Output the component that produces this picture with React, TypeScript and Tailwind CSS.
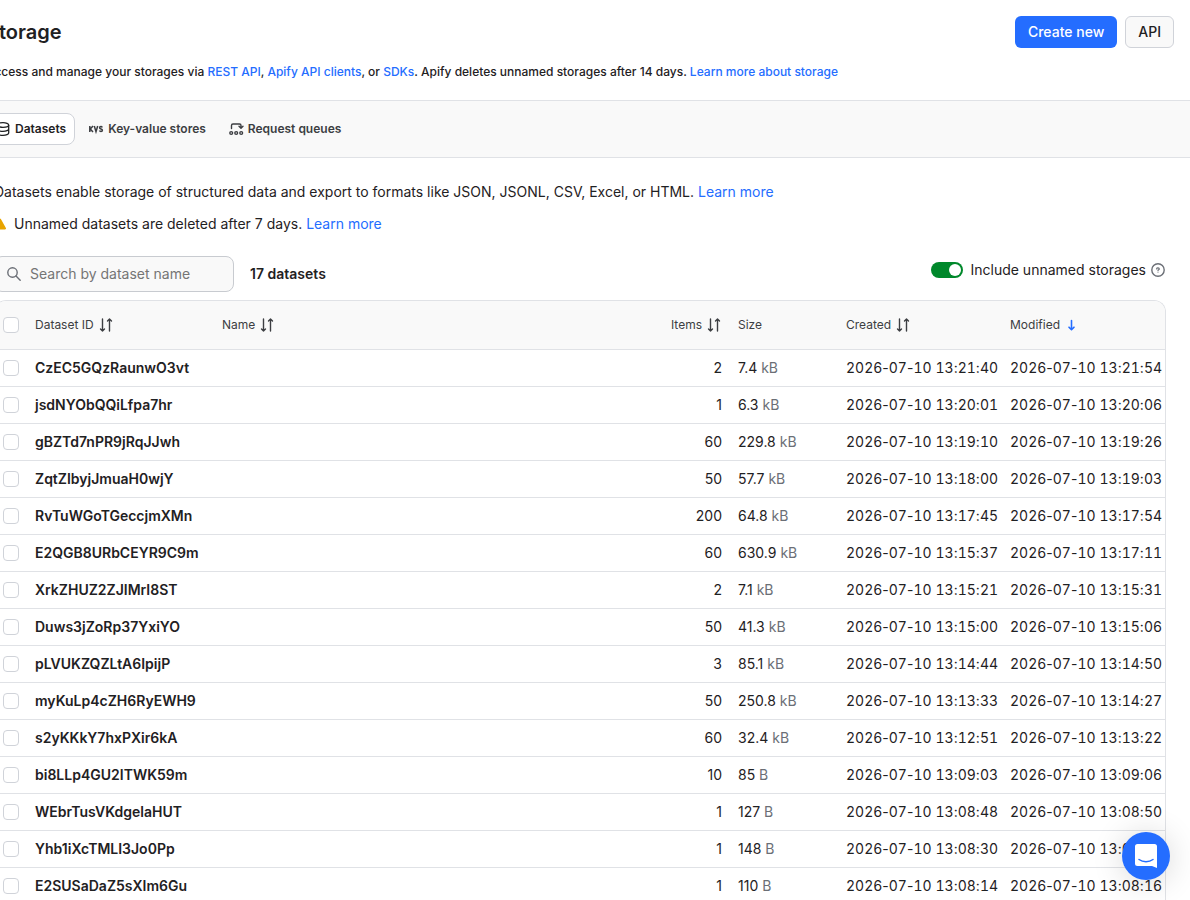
import React, { useState } from 'react';

interface Dataset {
  id: string;
  items: number;
  size: string;
  unit: string;
  created: string;
  modified: string;
}

const datasets: Dataset[] = [
  { id: 'CzEC5GQzRaunwO3vt', items: 2, size: '7.4', unit: 'kB', created: '2026-07-10 13:21:40', modified: '2026-07-10 13:21:54' },
  { id: 'jsdNYObQQiLfpa7hr', items: 1, size: '6.3', unit: 'kB', created: '2026-07-10 13:20:01', modified: '2026-07-10 13:20:06' },
  { id: 'gBZTd7nPR9jRqJJwh', items: 60, size: '229.8', unit: 'kB', created: '2026-07-10 13:19:10', modified: '2026-07-10 13:19:26' },
  { id: 'ZqtZIbyjJmuaH0wjY', items: 50, size: '57.7', unit: 'kB', created: '2026-07-10 13:18:00', modified: '2026-07-10 13:19:03' },
  { id: 'RvTuWGoTGeccjmXMn', items: 200, size: '64.8', unit: 'kB', created: '2026-07-10 13:17:45', modified: '2026-07-10 13:17:54' },
  { id: 'E2QGB8URbCEYR9C9m', items: 60, size: '630.9', unit: 'kB', created: '2026-07-10 13:15:37', modified: '2026-07-10 13:17:11' },
  { id: 'XrkZHUZ2ZJIMrI8ST', items: 2, size: '7.1', unit: 'kB', created: '2026-07-10 13:15:21', modified: '2026-07-10 13:15:31' },
  { id: 'Duws3jZoRp37YxiYO', items: 50, size: '41.3', unit: 'kB', created: '2026-07-10 13:15:00', modified: '2026-07-10 13:15:06' },
  { id: 'pLVUKZQZLtA6IpijP', items: 3, size: '85.1', unit: 'kB', created: '2026-07-10 13:14:44', modified: '2026-07-10 13:14:50' },
  { id: 'myKuLp4cZH6RyEWH9', items: 50, size: '250.8', unit: 'kB', created: '2026-07-10 13:13:33', modified: '2026-07-10 13:14:27' },
  { id: 's2yKKkY7hxPXir6kA', items: 60, size: '32.4', unit: 'kB', created: '2026-07-10 13:12:51', modified: '2026-07-10 13:13:22' },
  { id: 'bi8LLp4GU2ITWK59m', items: 10, size: '85', unit: 'B', created: '2026-07-10 13:09:03', modified: '2026-07-10 13:09:06' },
  { id: 'WEbrTusVKdgelaHUT', items: 1, size: '127', unit: 'B', created: '2026-07-10 13:08:48', modified: '2026-07-10 13:08:50' },
  { id: 'Yhb1iXcTMLI3Jo0Pp', items: 1, size: '148', unit: 'B', created: '2026-07-10 13:08:30', modified: '2026-07-10 13:08:32' },
  { id: 'E2SUSaDaZ5sXIm6Gu', items: 1, size: '110', unit: 'B', created: '2026-07-10 13:08:14', modified: '2026-07-10 13:08:16' },
];

const SortIcon = () => (
  <svg className="h-4 w-4 shrink-0" viewBox="0 0 16 16" fill="none" stroke="#3c3e42" strokeWidth="1.4" strokeLinecap="round" strokeLinejoin="round">
    <path d="M4.500 2v12M2.500 12 4.500 14l2-2M11.500 14V2M9.500 4l2-2 2 2" />
  </svg>
);

const DownIcon = () => (
  <svg className="h-4 w-4 shrink-0" viewBox="0 0 16 16" fill="none" stroke="#246dff" strokeWidth="1.6" strokeLinecap="round" strokeLinejoin="round">
    <path d="M7.500 3.600v9M5 10.200l2.500 2.500 2.500-2.500" />
  </svg>
);

const DatasetIcon = () => (
  <svg className="h-4 w-4 shrink-0" viewBox="0 0 16 16" fill="none" stroke="currentColor" strokeWidth="1.3">
    <ellipse cx="8" cy="4" rx="5.700" ry="2.300" />
    <path d="M2.300 4v8c0 1.300 2.500 2.300 5.700 2.300s5.700-1 5.700-2.300V4M2.300 8c0 1.300 2.500 2.300 5.700 2.300s5.700-1 5.700-2.300" />
  </svg>
);

const KvsIcon = () => (
  <svg className="h-4 w-4 shrink-0" viewBox="0 0 16 16" fill="none" stroke="currentColor" strokeWidth="1.500">
    <path d="M1.800 5v6M5 5 2.300 8 5 11M6.300 5 8 10.600 9.700 5M14.200 6.400c-.2-.6-.7-.8-1.300-.8-.8 0-1.300.4-1.300 1.100 0 1.600 2.800.9 2.800 2.600 0 .8-.6 1.200-1.400 1.200-.8 0-1.300-.3-1.500-.9" />
  </svg>
);

const QueueIcon = () => (
  <svg className="h-4 w-4 shrink-0" viewBox="0 0 16 16" fill="none" stroke="currentColor" strokeWidth="1.4" strokeLinecap="round" strokeLinejoin="round">
    <path d="M3.500 7.500V4.500a1.500 1.500 0 0 1 1.500-1.500h6.500a1.500 1.500 0 0 1 1.500 1.500v2.500M11 5.300l2 2 2-2" />
    <circle cx="3.200" cy="12" r="1.400" />
    <circle cx="8.200" cy="12" r="1.400" />
    <circle cx="13.200" cy="12" r="1.400" />
  </svg>
);

const WarningIcon = () => (
  <svg className="h-3 w-3 shrink-0" viewBox="0 0 12 12">
    <path d="M6 1.500 11 10.500H1Z" fill="#e8a400" stroke="#e8a400" strokeWidth="2" strokeLinejoin="round" />
    <path d="M5.500 4v3.500M5.500 9v1" stroke="#fff" strokeWidth="1" />
  </svg>
);

const SearchIcon = () => (
  <svg className="h-4 w-4 shrink-0" viewBox="0 0 16 16" fill="none" stroke="#6b6f76" strokeWidth="1.4" strokeLinecap="round">
    <circle cx="6.500" cy="6.500" r="4.700" />
    <path d="m10 10 4.200 4.200" />
  </svg>
);

const HelpIcon = () => (
  <svg className="h-4 w-4 shrink-0" viewBox="0 0 16 16" fill="none" stroke="#6b6f76" strokeWidth="1.400" strokeLinecap="round">
    <circle cx="8" cy="8" r="6.200" />
    <path d="M6.700 6.900c0-1.500 2.600-1.400 2.600 0 0 .8-1.300.8-1.300 1.500M8 10v.1" strokeWidth="1.200" />
  </svg>
);

const ChatIcon = () => (
  <svg className="h-6 w-6" viewBox="0 0 24 24">
    <path d="M3.500 0h17A2.500 2.500 0 0 1 23 2.500V24l-5-2H3.500A2.500 2.500 0 0 1 1 19.500v-17A2.500 2.500 0 0 1 3.500 0Z" fill="#fff" />
    <path d="M5 15.500c4 3 10 3 14 0" fill="none" stroke="#246dff" strokeWidth="1.500" strokeLinecap="round" />
  </svg>
);

interface LinkProps {
  children: React.ReactNode;
}

const TextLink: React.FC<LinkProps> = ({ children }) => (
  <a href="#" className="text-[#246dff] hover:underline">{children}</a>
);

interface TabProps {
  icon: React.ReactNode;
  label: string;
  active: boolean;
  onClick: () => void;
}

const Tab: React.FC<TabProps> = ({ icon, label, active, onClick }) => (
  <button
    type="button"
    role="tab"
    aria-selected={active}
    onClick={onClick}
    className={`flex h-8 items-center gap-1 rounded-lg border px-2 text-xs font-semibold ${active ? 'border-[#d0d3d9] bg-white text-[#1f2123]' : 'border-transparent text-[#3c3e42]'}`}
  >
    {icon}
    {label}
  </button>
);

const Checkbox: React.FC<{ label: string }> = ({ label }) => (
  <input
    type="checkbox"
    aria-label={label}
    className="block h-4 w-4 appearance-none rounded border border-[#d0d3d9] bg-white checked:border-[#246dff] checked:bg-[#246dff]"
  />
);

// Only the digits are tabular, separators keep their own width
const Timestamp: React.FC<{ value: string }> = ({ value }) => (
  <time dateTime={value} className="whitespace-nowrap">
    {value.split(/(\d+)/).map((part, i) => (
      /\d/.test(part) ? <span key={i} className="tabular-nums">{part}</span> : part
    ))}
  </time>
);

interface SortHeaderProps {
  label: string;
  right?: boolean;
  icon?: React.ReactNode;
}

const SortHeader: React.FC<SortHeaderProps> = ({ label, right = false, icon }) => (
  <th className="px-2 font-normal">
    <button type="button" className={`flex items-center gap-1 ${right ? 'ml-auto' : ''}`}>
      {label}
      {icon ?? <SortIcon />}
    </button>
  </th>
);

export default function App() {
  const [tab, setTab] = useState('datasets');
  const [unnamed, setUnnamed] = useState(true);

  return (
    <div className="h-screen overflow-hidden bg-white font-['Inter',sans-serif] text-sm text-[#1f2123]">
      <div className="-ml-[30px]">
        <header className="flex items-center justify-between px-4 pt-4">
          <h1 className="text-xl font-semibold">Storage</h1>
          <div className="flex gap-2">
            <button type="button" className="h-8 rounded-md bg-[#246dff] px-[13px] font-medium text-white">Create new</button>
            <button type="button" className="h-8 rounded-md border border-[#d0d3d9] bg-[#f9f9f9] px-3 font-medium">API</button>
          </div>
        </header>
        <p className="px-4 pt-4 pb-5 text-xs font-medium">
          Access and manage your storages via <TextLink>REST API</TextLink>, <TextLink>Apify API clients</TextLink>, or <TextLink>SDKs</TextLink>. Apify deletes unnamed storages after 14 days. <TextLink>Learn more about storage</TextLink>
        </p>

        <nav role="tablist" className="flex gap-1 border-y border-[#e0e2e6] bg-[#f9f9f9] px-4 py-3">
          <Tab icon={<DatasetIcon />} label="Datasets" active={tab === 'datasets'} onClick={() => setTab('datasets')} />
          <Tab icon={<KvsIcon />} label="Key-value stores" active={tab === 'kvs'} onClick={() => setTab('kvs')} />
          <Tab icon={<QueueIcon />} label="Request queues" active={tab === 'queues'} onClick={() => setTab('queues')} />
        </nav>

        <main className="px-6 pt-6">
          <p>
            Datasets enable storage of structured data and export to formats like JSON, JSONL, CSV, Excel, or HTML. <TextLink>Learn more</TextLink>
          </p>
          <p className="mt-3 flex items-center gap-2">
            <WarningIcon />
            <span>Unnamed datasets are deleted after 7 days. <TextLink>Learn more</TextLink></span>
          </p>

          <div className="mt-[22px] flex items-center justify-between">
            <div className="flex items-center gap-4">
              <label className="flex h-9 w-60 items-center gap-2 rounded-lg border border-[#c8cbd0] bg-[#f9f9f9] px-[11px]">
                <SearchIcon />
                <input type="text" aria-label="Search by dataset name" placeholder="Search by dataset name" className="min-w-0 flex-1 bg-transparent outline-none placeholder:text-[#757575]" />
              </label>
              <span className="font-semibold">17 datasets</span>
            </div>
            <div className="flex items-center gap-1 self-start pt-1">
              <label className="flex items-center gap-2">
                <input type="checkbox" role="switch" className="peer sr-only" checked={unnamed} onChange={(e) => setUnnamed(e.target.checked)} />
                <span className={`flex h-4 w-8 items-center rounded-full px-[2px] ${unnamed ? 'justify-end bg-[#00882b]' : 'bg-[#a6abb3]'}`}>
                  <span className="h-3 w-3 rounded-full bg-white" />
                </span>
                Include unnamed storages
              </label>
              <HelpIcon />
            </div>
          </div>

          <div className="mt-2 overflow-hidden rounded-t-xl border border-b-0 border-[#e0e2e6]">
            <table className="w-full table-fixed border-separate border-spacing-0 text-left">
              <colgroup>
                <col className="w-8" />
                <col className="w-[187px]" />
                <col />
                <col className="w-[108px]" />
                <col className="w-[108px]" />
                <col className="w-[164px]" />
                <col className="w-[163px]" />
              </colgroup>
              <thead>
                <tr className="h-[49px] bg-[#f9f9f9] text-xs text-[#3c3e42] *:border-b *:border-[#e0e2e6]">
                  <th className="pl-2"><Checkbox label="Select all datasets" /></th>
                  <SortHeader label="Dataset ID" />
                  <SortHeader label="Name" />
                  <SortHeader label="Items" right />
                  <th className="px-2 font-normal">Size</th>
                  <SortHeader label="Created" />
                  <SortHeader label="Modified" icon={<DownIcon />} />
                </tr>
              </thead>
              <tbody>
                {datasets.map((d) => (
                  <tr key={d.id} className="h-[37px] *:border-b *:border-[#e0e2e6]">
                    <td className="pl-2"><Checkbox label={`Select ${d.id}`} /></td>
                    <td className="px-2 font-semibold">{d.id}</td>
                    <td className="px-2" />
                    <td className="px-2 text-right">{d.items}</td>
                    <td className="px-2">{d.size} <span className="text-[#6b6f76]">{d.unit}</span></td>
                    <td className="px-2"><Timestamp value={d.created} /></td>
                    <td className="px-2"><Timestamp value={d.modified} /></td>
                  </tr>
                ))}
              </tbody>
            </table>
          </div>
        </main>
      </div>

      <button type="button" aria-label="Open chat" className="fixed right-5 bottom-5 flex h-12 w-12 items-center justify-center rounded-full bg-[#246dff] shadow-[0_2px_32px_rgba(0,0,0,0.16)]">
        <ChatIcon />
      </button>
    </div>
  );
}
